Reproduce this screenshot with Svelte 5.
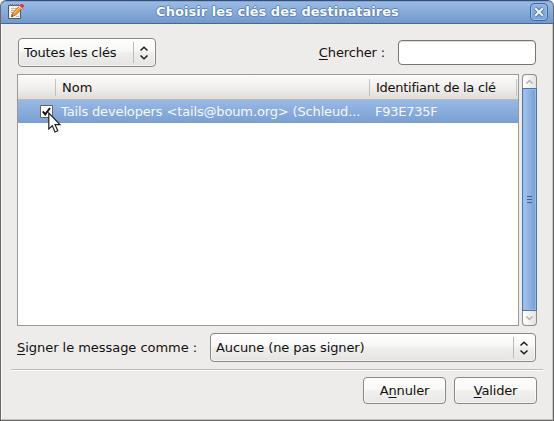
<script>
  const row = { name: 'Tails developers <tails@boum.org> (Schleud...', id: 'F93E735F' };
</script>

{#snippet arrows()}
  <span class="arrows">
    <svg width="10" height="14" viewBox="0 0 10 14" fill="none" stroke="#1c1c1c" stroke-width="1.5">
      <path d="M1.5 4.5 5 1.2 8.5 4.5M1.5 9.5 5 12.8 8.5 9.5" />
    </svg>
  </span>
{/snippet}

<div class="window">
  <header>
    <svg class="app" width="18" height="18" viewBox="0 0 18 18">
      <path d="M1.5 2.5h12v13h-12z" fill="#f1f1ec" stroke="#555750" />
      <path d="M3.5 1v2M5.5 1v2M7.5 1v2M9.5 1v2M11.5 1v2" stroke="#77796f" />
      <path d="M4 5.5h7M4 7.5h6M4 9.5h3M4 11.5h2M9 13.5h3" stroke="#b8bab5" />
      <path d="M4.5 13.5 6 9.6 12.6 2.9 15.3 5.4 8.7 12z" fill="#f39a38" stroke="#b8561a" stroke-width=".8" />
      <path d="m7 10 6-6" stroke="#ffd08a" />
      <path d="m12.1 2.6 1.5-1.4q2.2-.5 3.4 1.1v1.1L15.3 5z" fill="#e5343c" />
      <path d="m11.8 3 2.8 2.7" stroke="#d8d8d8" stroke-width="1.1" />
      <path d="m4.2 13.9.7-2 1.4 1.4z" fill="#333" />
    </svg>
    <h1>Choisir les clés des destinataires</h1>
    <button class="close" aria-label="Fermer">
      <svg width="12" height="12" viewBox="0 0 12 12">
        <path d="m2.2 2.2 7.6 7.6m0-7.6L2.2 9.8" stroke="#4a72a6" stroke-width="4" />
        <path d="m2.2 2.2 7.6 7.6m0-7.6L2.2 9.8" stroke="#edf2f9" stroke-width="2.3" />
      </svg>
    </button>
  </header>

  <main>
    <div class="top">
      <button class="combo filter"><span class="t all">Toutes les clés</span>{@render arrows()}</button>
      <label class="t find" for="find"><u>C</u>hercher :</label>
      <input id="find" />
    </div>

    <div class="list">
      <div class="tree">
        <div class="head">
          <span class="c0"></span>
          <span class="c1"><span class="t nom">Nom</span></span>
          <span class="c2"><span class="t ident">Identifiant de la clé</span></span>
        </div>
        <div class="row">
          <span class="check">
            <svg width="13" height="13" viewBox="0 0 13 13">
              <path d="M.5.5h12v12H.5z" fill="#fff" stroke="#66625e" />
              <path d="m2.8 6.3 2.4 3L10 3" fill="none" stroke="#111" stroke-width="2" />
            </svg>
          </span>
          <span class="t name">{row.name}</span>
          <span class="t id">{row.id}</span>
          <svg class="cursor" width="14" height="22" viewBox="0 0 14 22">
            <path d="M.8 1v16l3.5-3.2 2.7 6.2 2.8-1.2L7 12.7h5z" fill="#fff" stroke="#222" stroke-width="1.2" />
          </svg>
        </div>
      </div>
      <div class="scroll">
        <span class="step"><svg width="9" height="6" viewBox="0 0 9 6"><path d="m1.5 4.5 3-3 3 3" /></svg></span>
        <span class="thumb"><i></i><i></i><i></i></span>
        <span class="step down"><svg width="9" height="6" viewBox="0 0 9 6"><path d="m1.5 1.5 3 3 3-3" /></svg></span>
      </div>
    </div>

    <div class="sign">
      <span class="t signer"><u>S</u>igner le message comme :</span>
      <button class="combo who"><span class="t none">Aucune (ne pas signer)</span>{@render arrows()}</button>
    </div>
    <hr />
    <footer>
      <button class="action"><span class="t cancel">A<u>n</u>nuler</span></button>
      <button class="action"><span class="t ok"><u>V</u>alider</span></button>
    </footer>
  </main>
</div>

<style>
  :global(body) { margin: 0; background: #fff; }
  * { box-sizing: border-box; }
  .window {
    width: 554px; height: 421px; overflow: hidden;
    background: #edeceb; color: #111;
    border: solid #696867; border-width: 0 1px 1px; border-radius: 6px 6px 0 0;
    box-shadow: inset -1px -1px #c3c2c0, inset 1px 0 #fafafa;
    font: 13px/16px "DejaVu Sans", sans-serif;
  }
  button, input { margin: 0; font: inherit; color: inherit; }
  .t { white-space: nowrap; }
  u { text-decoration: underline; text-underline-offset: 2px; text-decoration-thickness: 1px; text-decoration-skip-ink: none; }

  header {
    display: flex; align-items: center; height: 24px; margin: 0 -1px; padding: 0 5px;
    border: 1px solid #3f69a0; border-top-color: #354f77; border-radius: 6px 6px 0 0;
    background: linear-gradient(#9bbce8, #7399cb);
    box-shadow: inset 0 1px #87a5cf;
  }
  h1 {
    flex: 1; margin: 0; text-align: center; white-space: nowrap;
    font: bold 13px/16px "DejaVu Sans", sans-serif; letter-spacing: .04px; color: #f8fafd;
    text-shadow: 1px 0 #5d84b5, -1px 0 #5d84b5, 0 1px #5d84b5, 0 -1px #5d84b5;
  }
  .close {
    display: grid; place-items: center; width: 18px; height: 18px; padding: 0;
    border: 1px solid #42699f; border-radius: 4px; background: linear-gradient(#8fb3e2, #7da4d7);
    box-shadow: inset 0 0 0 1px #9cbce6;
  }
  .app { margin-left: 1px; }

  main { padding: 14px 16px 0 16px; }
  .top { display: flex; align-items: center; width: 519px; height: 29px; padding: 0 0 0 1px; }
  .combo {
    display: flex; align-items: center; justify-content: space-between; height: 29px; padding: 0 0 0 5px;
    border: 1px solid #898683; border-radius: 4px; text-align: left;
    background: linear-gradient(#fff, #f7f7f6 45%, #efefee 50%, #e5e4e2);
    box-shadow: inset 0 0 0 1px #fff9;
  }
  .filter { width: 138px; }
  .arrows { display: grid; place-items: center; width: 22px; height: 21px; padding-right: 1px; border-left: 1px solid #bcbab7; }
  .find { margin-left: auto; letter-spacing: -.15px; }
  .all { letter-spacing: -.1px; }
  .name { letter-spacing: -.145px; }
  .ident { letter-spacing: -.27px; }
  .id { letter-spacing: -.27px; }
  .none { letter-spacing: -.1px; }
  .signer { letter-spacing: -.04px; }
  .cancel, .ok { letter-spacing: -.15px; }
  #find {
    width: 138px; height: 25px; margin: 0 0 0 13px; padding: 0 4px; border: 1px solid #777472;
    border-radius: 4px; background: #fff; box-shadow: inset 0 1px #ddd; outline: none;
  }

  .list { display: flex; gap: 3px; height: 252px; margin-top: 7px; }
  .tree { width: 502px; border: 1px solid #9b9895; background: #fff; }
  .head { display: flex; height: 25px; border-bottom: 1px solid #bcb9b5; background: linear-gradient(#fbfbfa, #f1f0ee 50%, #dfddda); }
  .head > span { display: flex; align-items: center; height: 17px; margin-top: 4px; border-right: 1px solid #c5c2be; }
  .c0 { width: 38px; }
  .c1 { width: 314px; padding-left: 6px; }
  .c2 { width: 147px; padding-left: 6px; }
  .row {
    position: relative; display: flex; align-items: center; height: 23px; color: #f4f7fc;
    background: linear-gradient(#98b9e5, #799fd2);
  }
  .check { display: flex; width: 43px; padding-left: 22px; }
  .name { width: 314px; }
  .cursor { position: absolute; left: 30px; top: 12px; }

  .scroll { display: flex; flex-direction: column; width: 15px; height: 252px; }
  .step {
    display: grid; place-items: center; height: 14px; border: 1px solid #8f8c89; border-bottom: 0;
    border-radius: 4px 4px 0 0; background: linear-gradient(90deg, #fff, #e4e3e1);
  }
  .step.down { height: 15px; border: 1px solid #8f8c89; border-top: 0; border-radius: 0 0 4px 4px; }
  .step path { fill: none; stroke: #b0aeab; stroke-width: 1.4; }
  .thumb {
    display: flex; flex: 1; flex-direction: column; align-items: center; justify-content: center; gap: 2px;
    border: 1px solid #4a74ad; background: linear-gradient(90deg, #a7c5ed, #769dd1);
    box-shadow: inset 0 0 0 1px #9abbe7;
  }
  .thumb i { width: 5px; height: 1px; background: #3d5f91; }

  .sign { display: flex; align-items: center; height: 29px; margin-top: 7px; }
  .signer { width: 193px; }
  .who { width: 326px; }
  hr { height: 2px; margin: 7px -6px 0; border: solid; border-width: 1px 0; border-color: #bebcb9 #fff #fff; }
  footer { display: flex; justify-content: flex-end; gap: 8px; margin-top: 6px; }
  .action {
    width: 83px; height: 27px; padding: 0; border: 1px solid #898683; border-radius: 4px; text-align: center;
    background: linear-gradient(#fff, #f8f8f7 45%, #f1f1ef 50%, #e8e7e5); box-shadow: inset 0 0 0 1px #fff9;
  }
</style>
